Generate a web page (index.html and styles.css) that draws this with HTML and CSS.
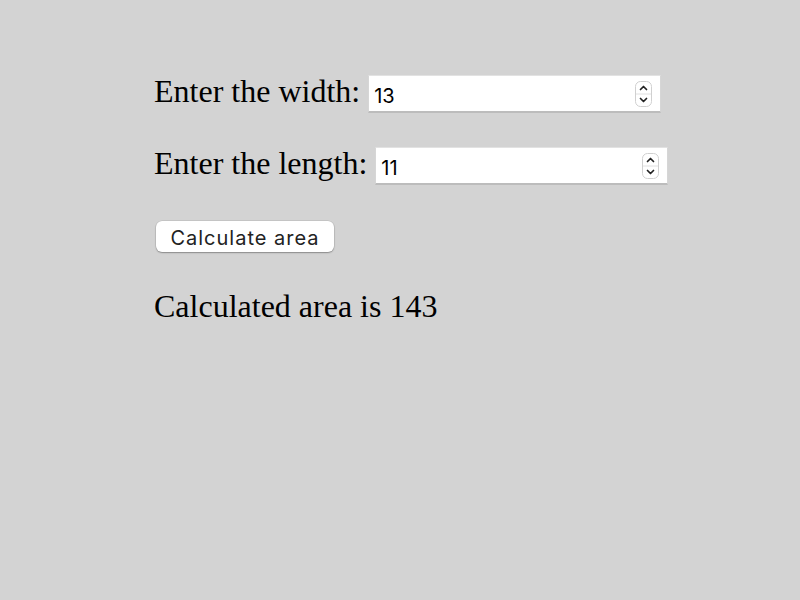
FILE: index.html
```html
<!DOCTYPE html>
<html>
<head>
<meta charset="utf-8">
<link rel="stylesheet" href="styles.css">
</head>
<body>
<main class="page">
  <div class="row">
    <label class="label" for="w">Enter the width:</label>
    <span class="field field-w">
      <input id="w" class="num" type="number" value="13">
      <svg class="spin" width="17" height="26" viewBox="0 0 17 26"><rect x="0.5" y="0.5" width="16" height="25" rx="5" fill="#fff" stroke="#d0d0d0"/><line x1="1" y1="13" x2="16" y2="13" stroke="#e0e0e0"/><path d="M5.5 8.5 L8.5 5.5 L11.5 8.5" fill="none" stroke="#222" stroke-width="1.7" stroke-linecap="round" stroke-linejoin="round"/><path d="M5.5 17.5 L8.5 20.5 L11.5 17.5" fill="none" stroke="#222" stroke-width="1.7" stroke-linecap="round" stroke-linejoin="round"/></svg>
    </span>
  </div>
  <div class="row">
    <label class="label" for="l">Enter the length:</label>
    <span class="field">
      <input id="l" class="num" type="number" value="11">
      <svg class="spin" width="17" height="26" viewBox="0 0 17 26"><rect x="0.5" y="0.5" width="16" height="25" rx="5" fill="#fff" stroke="#d0d0d0"/><line x1="1" y1="13" x2="16" y2="13" stroke="#e0e0e0"/><path d="M5.5 8.5 L8.5 5.5 L11.5 8.5" fill="none" stroke="#222" stroke-width="1.7" stroke-linecap="round" stroke-linejoin="round"/><path d="M5.5 17.5 L8.5 20.5 L11.5 17.5" fill="none" stroke="#222" stroke-width="1.7" stroke-linecap="round" stroke-linejoin="round"/></svg>
    </span>
  </div>
  <div class="actions">
    <button class="btn" type="button">Calculate area</button>
  </div>
  <p class="result">Calculated area is 143</p>
</main>
</body>
</html>
```
FILE: styles.css
```css
html, body {
  margin: 0;
  padding: 0;
  background: #d3d3d3;
  height: 100%;
}
.page {
  display: flex;
  flex-direction: column;
  align-items: flex-start;
  gap: 34px;
  padding: 75px 0 0 154px;
  font-family: "Liberation Serif", "Times New Roman", serif;
  color: #000;
}
.row {
  display: flex;
  align-items: center;
  gap: 8px;
  height: 38px;
}
.label {
  font-size: 32px;
  line-height: 36px;
  margin-bottom: 6px;
  white-space: nowrap;
}
.field {
  position: relative;
  display: block;
  width: 293px;
  height: 38px;
}
.num {
  box-sizing: border-box;
  display: block;
  width: 100%;
  height: 38px;
  margin: 0;
  padding: 4px 4px 0 5px;
  border: 1px solid #d6d6d6;
  border-top-color: #e2e2e2;
  border-bottom: 2px solid #bcbcbc;
  background: #fff;
  font-family: Inter, "Liberation Sans", sans-serif;
  font-size: 20px;
  color: #000;
  outline: none;
  -moz-appearance: textfield;
  appearance: textfield;
}
.num::-webkit-inner-spin-button,
.num::-webkit-outer-spin-button {
  -webkit-appearance: none;
  margin: 0;
}
.spin {
  position: absolute;
  right: 9px;
  top: 6px;
}
.actions {
  margin-top: 2px;
  padding-left: 2px;
}
.btn {
  box-sizing: border-box;
  width: 178px;
  height: 31px;
  margin: 0;
  padding: 2px 0 0;
  border: none;
  border-radius: 6px;
  background: #fff;
  box-shadow: 0 0 0 0.5px rgba(0,0,0,0.12), 0 1px 1.5px rgba(0,0,0,0.3);
  font-family: Inter, "Liberation Sans", sans-serif;
  font-size: 20px;
  letter-spacing: 1px;
  color: #222;
}
.result {
  margin: 2px 0 0;
  font-size: 32px;
  line-height: 36px;
}
```
